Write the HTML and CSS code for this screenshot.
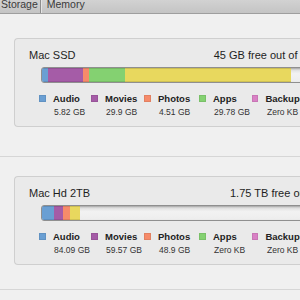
FILE: index.html
```html
<!DOCTYPE html>
<html lang="en">
<head>
  <meta charset="UTF-8" />
  <title>Storage</title>
  <link rel="stylesheet" href="styles.css">
</head>
<body>
  <div class="toolbar">
    <span class="tab">Storage</span>
    <span class="tab-sep"></span>
    <span class="tab">Memory</span>
  </div>

  <div class="seccion seccion-uno">
    <div class="disco">
      <div class="disco-cabecera">
        <span class="disco-nombre">Mac SSD</span>
        <span class="disco-libre">45 GB free out of 249.8 GB</span>
      </div>
      <div class="barra">
        <span class="seg audio" style="width: 6px"></span>
        <span class="seg movies" style="width: 35px"></span>
        <span class="seg photos" style="width: 6px"></span>
        <span class="seg apps" style="width: 36px"></span>
        <span class="seg otros" style="width: 166px"></span>
      </div>
      <div class="leyenda">
        <div class="item"><div class="item-fila"><i class="cuadro audio"></i><b>Audio</b></div><span class="valor">5.82 GB</span></div>
        <div class="item"><div class="item-fila"><i class="cuadro movies"></i><b>Movies</b></div><span class="valor">29.9 GB</span></div>
        <div class="item"><div class="item-fila"><i class="cuadro photos"></i><b>Photos</b></div><span class="valor">4.51 GB</span></div>
        <div class="item"><div class="item-fila"><i class="cuadro apps"></i><b>Apps</b></div><span class="valor">29.78 GB</span></div>
        <div class="item"><div class="item-fila"><i class="cuadro backups"></i><b>Backups</b></div><span class="valor">Zero KB</span></div>
      </div>
    </div>
  </div>

  <div class="seccion seccion-dos">
    <div class="disco">
      <div class="disco-cabecera">
        <span class="disco-nombre">Mac Hd 2TB</span>
        <span class="disco-libre">1.75 TB free out of 2 TB</span>
      </div>
      <div class="barra">
        <span class="seg audio" style="width: 12px"></span>
        <span class="seg movies" style="width: 9px"></span>
        <span class="seg photos" style="width: 7px"></span>
        <span class="seg otros" style="width: 10px"></span>
      </div>
      <div class="leyenda">
        <div class="item"><div class="item-fila"><i class="cuadro audio"></i><b>Audio</b></div><span class="valor">84.09 GB</span></div>
        <div class="item"><div class="item-fila"><i class="cuadro movies"></i><b>Movies</b></div><span class="valor">59.57 GB</span></div>
        <div class="item"><div class="item-fila"><i class="cuadro photos"></i><b>Photos</b></div><span class="valor">48.9 GB</span></div>
        <div class="item"><div class="item-fila"><i class="cuadro apps"></i><b>Apps</b></div><span class="valor">Zero KB</span></div>
        <div class="item"><div class="item-fila"><i class="cuadro backups"></i><b>Backups</b></div><span class="valor">Zero KB</span></div>
      </div>
    </div>
  </div>
</body>
</html>
```

FILE: styles.css
```css
body {
  margin: 0;
  padding: 0;
  width: 300px;
  height: 300px;
  overflow: hidden;
  background: #f0f0f0;
  font-family: 'Liberation Sans', Arial, sans-serif;
  color: #1e1e1e;
}

.toolbar {
  display: flex;
  height: 13px;
  border-bottom: 1px solid #9e9e9e;
  background: linear-gradient(#d2d2d2, #c4c4c4);
}

.tab {
  font-size: 10.5px;
  line-height: 8px;
  color: #3a3a3a;
  padding-left: 1px;
}

.tab-sep {
  width: 1px;
  margin: 0 4px 0 2px;
  background: #8e8e8e;
  border-right: 1px solid #e4e4e4;
}

.seccion {
  border-bottom: 1px solid #d6d6d6;
  padding-left: 14px;
}

.seccion-uno {
  padding-top: 24px;
  padding-bottom: 29px;
}

.seccion-dos {
  padding-top: 19px;
  padding-bottom: 24px;
}

.disco {
  width: 326px;
  padding: 10px 0 9px 14px;
  background: #eaeaea;
  border: 1px solid #cfcfcf;
  border-right: none;
  border-radius: 4px 0 0 4px;
}

.disco-cabecera {
  display: flex;
  justify-content: space-between;
  font-size: 11px;
  line-height: 13px;
}

.disco-libre {
  padding-right: 8px;
}

.barra {
  display: flex;
  height: 14px;
  margin: 5px 0 0 12px;
  border: 1px solid #8f8f8f;
  border-radius: 3px;
  overflow: hidden;
  background: linear-gradient(#d9d9d9, #f2f2f2 40%, #ededed);
  box-shadow: inset 0 1px 2px rgba(0, 0, 0, 0.25);
}

.seg {
  display: block;
  height: 100%;
  box-shadow: inset 0 1px 0 rgba(0, 0, 0, 0.12), inset 0 -1px 0 rgba(0, 0, 0, 0.1);
}

.audio { background: #6a9fd3; }
.movies { background: #a55ca7; }
.photos { background: #f68b6a; }
.apps { background: #84d171; }
.otros { background: #e8d85e; }
.backups { background: #d981c5; }

.leyenda {
  display: grid;
  grid-template-columns: 52px 53px 55px 53px 53px;
  margin: 10px 0 0 10px;
}

.item-fila {
  display: flex;
  align-items: center;
  gap: 7px;
  font-size: 9.5px;
  line-height: 11px;
}

.item-fila b {
  color: #222;
}

.cuadro {
  display: block;
  width: 7px;
  height: 7px;
  box-shadow: inset 0 0 0 1px rgba(0, 0, 0, 0.08);
}

.valor {
  display: block;
  padding: 3px 0 0 15px;
  font-size: 8.5px;
  line-height: 10px;
  color: #333;
}
```
